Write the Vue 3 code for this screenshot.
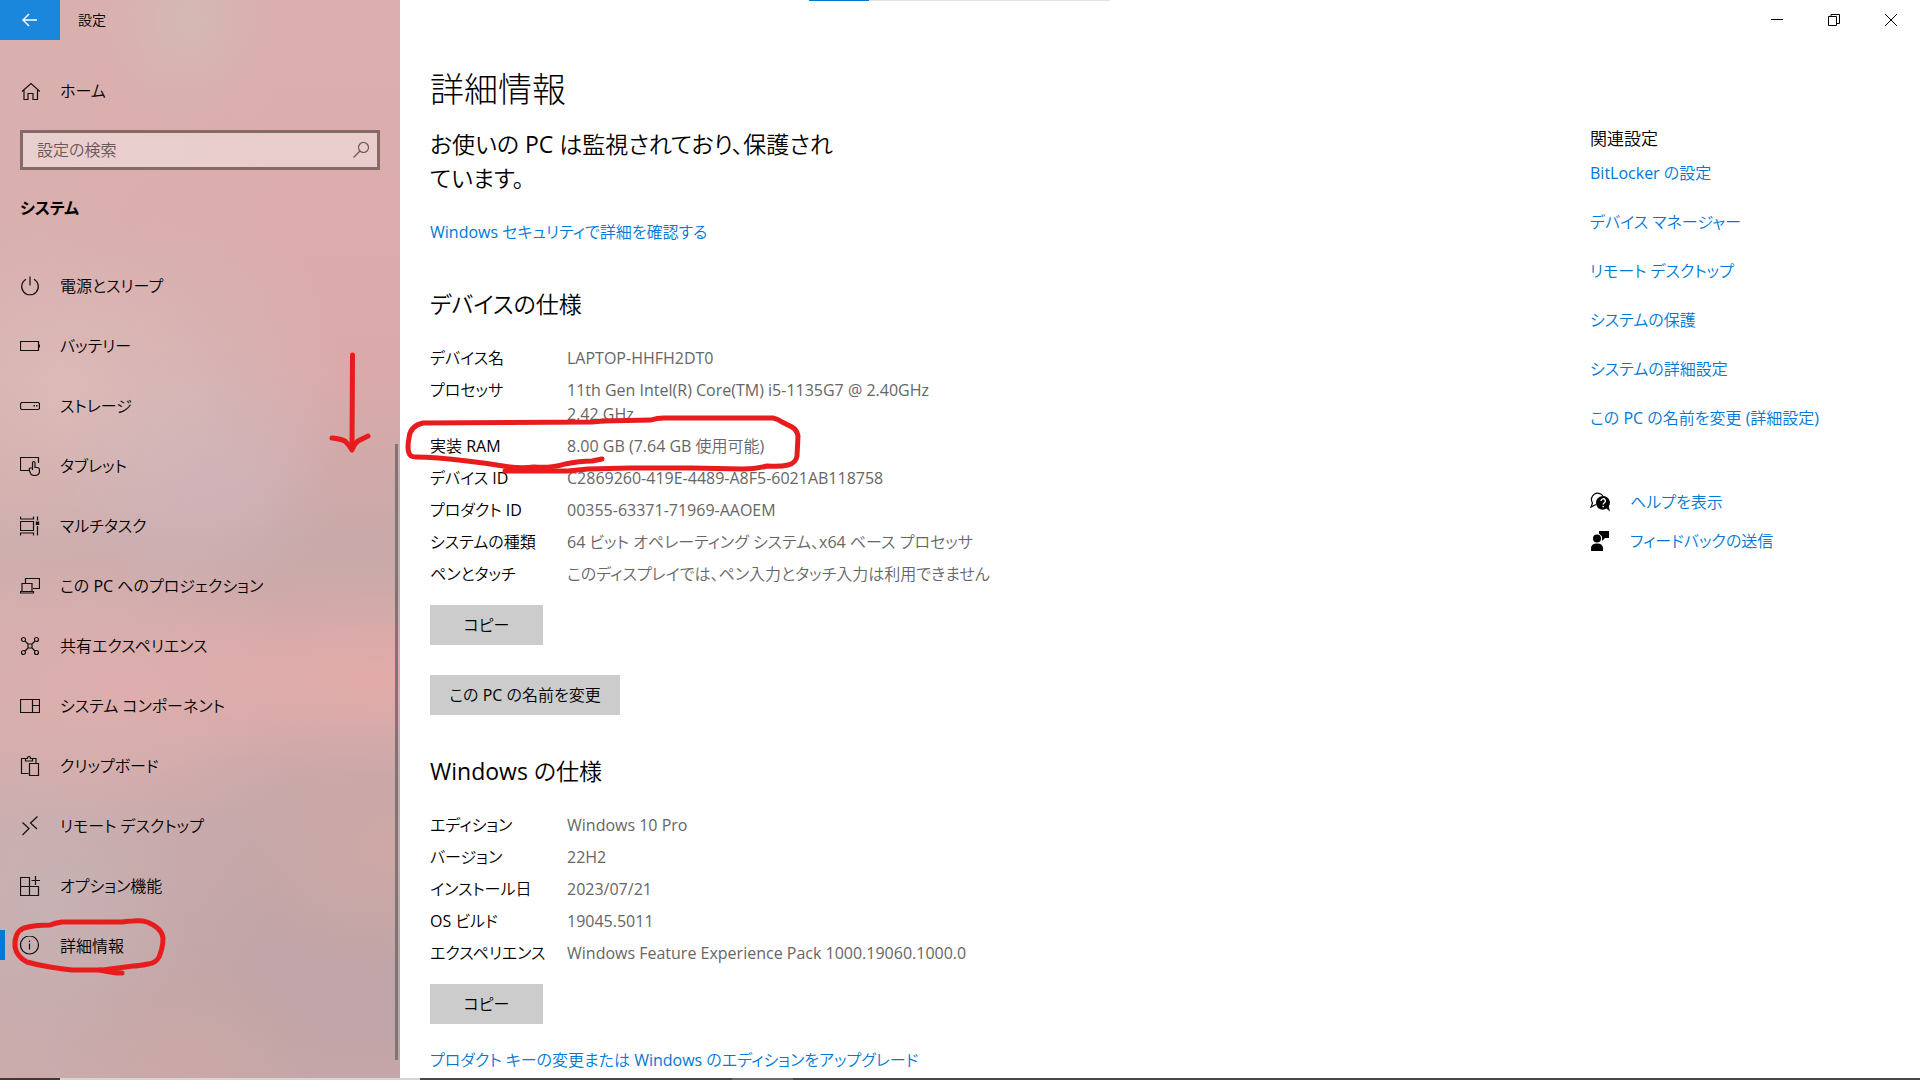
<template>
  <div class="screen">
    <div class="window">
      <!-- サイドバー -->
      <aside class="sidebar">
        <div class="titlebar">
          <button class="back-btn" type="button" aria-label="戻る">
            <svg width="16" height="14" viewBox="0 0 16 14">
              <path d="M15 7H1M7 1L1 7l6 6" />
            </svg>
          </button>
          <span class="app-name">設定</span>
        </div>

        <a href="#" class="nav-item home">
          <svg class="icon" width="20" height="20" viewBox="0 0 20 20">
            <path d="M2 10.500L11 2.500l9 8M4 9v9.500h4V12.500h5v6h4.500V9" />
          </svg>
          <span>ホーム</span>
        </a>

        <div class="search">
          <input v-model="keyword" type="text" placeholder="設定の検索" aria-label="設定の検索" />
          <svg width="16" height="16" viewBox="0 0 16 16">
            <circle cx="10.500" cy="5.500" r="5" />
            <path d="M7 9L0.500 15.500" />
          </svg>
        </div>

        <h2 class="category">システム</h2>

        <nav class="nav">
          <a
            v-for="item in navItems"
            :key="item.label"
            href="#"
            class="nav-item"
            :class="{ active: item.label === current }"
            @click.prevent="current = item.label"
          >
            <svg class="icon" width="20" height="20" viewBox="0 0 20 20">
              <path :d="item.icon" />
              <path v-if="item.dot" class="dot" :d="item.dot" />
            </svg>
            <span>{{ item.label }}</span>
          </a>
        </nav>
        <div class="scrollbar"></div>
      </aside>

      <!-- メイン -->
      <div class="content">
        <div class="window-controls">
          <button type="button" aria-label="最小化">
            <svg width="14" height="14" viewBox="0 0 14 14"><path d="M1 6.500h12" /></svg>
          </button>
          <button type="button" aria-label="元に戻す">
            <svg width="14" height="14" viewBox="0 0 14 14">
              <path d="M1.500 3.500h8v9h-8zM4 3.500v-2h8.500v9h-3" />
            </svg>
          </button>
          <button type="button" aria-label="閉じる">
            <svg width="14" height="14" viewBox="0 0 14 14"><path d="M1 1l12 12M13 1L1 13" /></svg>
          </button>
        </div>

        <div class="columns">
          <main class="main">
            <h1>詳細情報</h1>
            <p class="status">お使いの PC は監視されており、保護され<br />ています。</p>
            <a href="#" class="link security">Windows セキュリティで詳細を確認する</a>

            <h2>デバイスの仕様</h2>
            <dl class="specs">
              <div v-for="row in deviceSpecs" :key="row.label" class="spec">
                <dt>{{ row.label }}</dt>
                <dd>{{ row.value }}</dd>
              </div>
            </dl>
            <button type="button" class="btn">コピー</button>
            <button type="button" class="btn rename">この PC の名前を変更</button>

            <h2>Windows の仕様</h2>
            <dl class="specs">
              <div v-for="row in windowsSpecs" :key="row.label" class="spec">
                <dt>{{ row.label }}</dt>
                <dd>{{ row.value }}</dd>
              </div>
            </dl>
            <button type="button" class="btn">コピー</button>
            <a href="#" class="link upgrade">プロダクト キーの変更または Windows のエディションをアップグレード</a>
          </main>

          <!-- 関連設定 -->
          <aside class="related">
            <h3>関連設定</h3>
            <ul class="related-links">
              <li v-for="text in relatedLinks" :key="text">
                <a href="#" class="link">{{ text }}</a>
              </li>
            </ul>
            <div class="support">
              <a href="#" class="link">
                <svg width="20" height="20" viewBox="0 0 20 20">
                  <path
                    d="M6 12.500L1 15l1.500-4A6 6 0 1 1 13 4"
                    fill="none"
                    stroke="#000"
                    stroke-width="1.200"
                  />
                  <path d="M13 4a6.800 6.800 0 1 0 3.500 12.500L20 19.500l-1.200-5A6.800 6.800 0 0 0 13 4z" fill="#000" />
                  <path
                    d="M11 9a2.200 2.200 0 1 1 3.200 2q-1 .6-1 1.500M13.200 13.800v1.500"
                    fill="none"
                    stroke="#fff"
                    stroke-width="1.400"
                  />
                </svg>
                <span>ヘルプを表示</span>
              </a>
              <a href="#" class="link">
                <svg width="20" height="20" viewBox="0 0 20 20">
                  <circle cx="7" cy="7.500" r="4" />
                  <path d="M1 20v-2.500q0-5 6-5t6 5V20z" />
                  <path d="M9 0h10v7h-4l-3 3V5.500L9 2.500z" />
                </svg>
                <span>フィードバックの送信</span>
              </a>
            </div>
          </aside>
        </div>
      </div>
    </div>

    <!-- ウィンドウ下のタスクバーの端 -->
    <div class="taskbar"><i class="task-start"></i><i class="task-search"></i><i class="task-gap"></i><i class="task-app"></i></div>
    <!-- 画面上端の進行バー -->
    <div class="progress"><i></i></div>

    <!-- 手書きの注釈 -->
    <svg class="ink" width="820" height="1000" viewBox="0 0 820 1000" aria-hidden="true">
      <path d="M352.500 355L352 448" />
      <path d="M332 438Q341 439 345 441Q349 445 352 450Q354 444 358 441L368 436" />
      <path
        d="M603 421L651 420Q657 418 664 418L773 418Q778 419 782 422L792 427Q797 430 798 436L797 456Q796 463 788 465Q780 467 767 466Q755 469 743 469L691 468L630 468L588 469L568 471L505 471"
      />
      <path
        d="M603 421L592 422L423 423Q410 426 409 438Q407 448 409 453Q410 457 416 457Q435 457 467 461Q485 463 503 466Q520 469 534 467Q553 468 565 464Q580 461 592 461L602 459"
      />
      <path
        d="M50 925Q55 923 62 922L122 922Q128 921 133 921Q141 920 147 922Q162 928 163 938Q163 948 159 957Q156 963 148 964Q138 966 133 966L103 970L72 970Q62 969 50 967Q37 965 27 962Q17 957 15 947Q14 932 24 928Q34 925 50 925"
      />
      <path d="M100 970Q112 973 122 973" />
    </svg>
  </div>
</template>

<script setup>
import { ref } from 'vue';

// 検索キーワード
const keyword = ref('');

// 選択中の項目
const current = ref('詳細情報');

// サイドバーの項目
const navItems = [
  { label: '電源とスリープ', icon: 'M10 0.500v9M6 3.200a8.300 8.300 0 1 0 8 0' },
  { label: 'バッテリー', icon: 'M0.500 5.500h18v9h-18zM19.500 8.500v3' },
  { label: 'ストレージ', icon: 'M1.500 6.500h17l1 1v5l-1 1h-17l-1-1v-5z', dot: 'M13.500 9h1.500v1.500h-1.500zM16 9h1.500v1.500H16z' },
  { label: 'タブレット', icon: 'M9 14.500H0.500v-13h18v5.500M12.500 14V7q0-1.500 1.200-1.500T15 7v4.500h2.500q2 .5 2 2.500v1q0 4.500-5 4.500-3 0-4-2L9.300 14q-.3-2 1-2h2' },
  { label: 'マルチタスク', icon: 'M0.500 0.500v2.500h13V0.500M0.500 19.500V17h13v2.500M0.500 5.500h13v9h-13zM17.500 0.500v4M17.500 10v9.500', dot: 'M15.800 5.500h3.400v3.400h-3.400z' },
  { label: 'この PC へのプロジェクション', icon: 'M5.500 7.500v-5h14v10h-6.500M2 15.500v-8h10v8M0.500 15.500h13v1.500h-13z' },
  { label: '共有エクスペリエンス', icon: 'M4.500 4.500L8 8M12 12l3.500 3.500M15.500 4.500L12 8M8 12l-3.500 3.500M8 8h4v4H8zM1.500 3.500a2 2 0 1 0 4 0a2 2 0 1 0-4 0M14.500 3.500a2 2 0 1 0 4 0a2 2 0 1 0-4 0M1.500 16.500a2 2 0 1 0 4 0a2 2 0 1 0-4 0M14.500 16.500a2 2 0 1 0 4 0a2 2 0 1 0-4 0' },
  { label: 'システム コンポーネント', icon: 'M0.500 3.500h19v13h-19zM12.500 3.500v13M12.500 9.500h7' },
  { label: 'クリップボード', icon: 'M8.500 17.500h-7v-15h4V5h7V2.500h3.500v4.500M5.500 2.500h2q0-2 1.500-2t1.500 2h2M9.500 7.500h9v12h-9z' },
  { label: 'リモート デスクトップ', icon: 'M2.500 6.500l6.500 6-6.500 6.500M17.500 0.500L10.500 7l6.500 6' },
  { label: 'オプション機能', icon: 'M10 1.500H0.500v18h18v-9H0.500M9.500 1.500v18M15.500 0v9M11.500 4.500h9' },
  { label: '詳細情報', icon: 'M0.500 9a9 9 0 1 0 18 0a9 9 0 1 0-18 0M9.500 7.500v6M9.500 4.500v1.500' }
];

// デバイスの仕様
const deviceSpecs = [
  { label: 'デバイス名', value: 'LAPTOP-HHFH2DT0' },
  { label: 'プロセッサ', value: '11th Gen Intel(R) Core(TM) i5-1135G7 @ 2.40GHz\n2.42 GHz' },
  { label: '実装 RAM', value: '8.00 GB (7.64 GB 使用可能)' },
  { label: 'デバイス ID', value: 'C2869260-419E-4489-A8F5-6021AB118758' },
  { label: 'プロダクト ID', value: '00355-63371-71969-AAOEM' },
  { label: 'システムの種類', value: '64 ビット オペレーティング システム、x64 ベース プロセッサ' },
  { label: 'ペンとタッチ', value: 'このディスプレイでは、ペン入力とタッチ入力は利用できません' }
];

// Windows の仕様
const windowsSpecs = [
  { label: 'エディション', value: 'Windows 10 Pro' },
  { label: 'バージョン', value: '22H2' },
  { label: 'インストール日', value: '2023/07/21' },
  { label: 'OS ビルド', value: '19045.5011' },
  { label: 'エクスペリエンス', value: 'Windows Feature Experience Pack 1000.19060.1000.0' }
];

// 関連リンク
const relatedLinks = [
  'BitLocker の設定',
  'デバイス マネージャー',
  'リモート デスクトップ',
  'システムの保護',
  'システムの詳細設定',
  'この PC の名前を変更 (詳細設定)'
];
</script>

<style>
body {
  margin: 0;
  background: #ffffff;
}
</style>

<style scoped>
.screen {
  position: relative;
  display: flex;
  flex-direction: column;
  height: 100vh;
  overflow: hidden;
  font-family: "Open Sans", "Noto Sans CJK JP DemiLight", "Noto Sans CJK JP", sans-serif;
  font-feature-settings: "palt";
  font-size: 16px;
  line-height: 24px;
  color: #000000;
}

h1,
h2,
h3,
p,
dl,
dd,
ul {
  margin: 0;
  padding: 0;
  font-weight: inherit;
}

button {
  border: 0;
  padding: 0;
  font: inherit;
  font-feature-settings: inherit;
  color: inherit;
}

svg {
  flex: none;
}

.window {
  display: flex;
  flex: 1;
  min-height: 0;
}

/* サイドバー */
.sidebar {
  position: relative;
  display: flex;
  flex-direction: column;
  flex: none;
  width: 400px;
  background:
    radial-gradient(ellipse 90px 110px at 190px 20px, rgba(207, 190, 184, 0.6), transparent),
    radial-gradient(ellipse 160px 180px at 60px 385px, rgba(219, 190, 186, 0.7), transparent),
    radial-gradient(ellipse 150px 200px at 195px 400px, rgba(214, 184, 184, 0.7), transparent),
    radial-gradient(ellipse 150px 130px at 195px 470px, rgba(203, 178, 190, 0.7), transparent),
    radial-gradient(ellipse 300px 100px at 380px 675px, rgba(226, 171, 169, 1), transparent),
    radial-gradient(ellipse 220px 150px at 110px 690px, rgba(222, 175, 174, 0.9), transparent),
    radial-gradient(ellipse 140px 150px at 50px 900px, rgba(198, 180, 182, 0.7), transparent),
    radial-gradient(ellipse 160px 120px at 390px 850px, rgba(206, 168, 165, 0.9), transparent),
    radial-gradient(ellipse 140px 120px at 190px 1070px, rgba(203, 168, 165, 0.8), transparent),
    linear-gradient(90deg, rgba(214, 182, 180, 0.4), transparent 70%),
    linear-gradient(#dcaead 0, #daaaaa 380px, #c9a9a9 540px, #d0aaaa 700px, #c5a7a9 830px, #c0a4a7 1000px, #c5a6a9 1078px);
}

.titlebar {
  display: flex;
  align-items: center;
  height: 40px;
}

.back-btn {
  display: flex;
  align-items: center;
  justify-content: center;
  width: 60px;
  height: 40px;
  background: #1a86dc;
}

.back-btn svg {
  fill: none;
  stroke: #ffffff;
  stroke-width: 1.500;
}

.app-name {
  margin-left: 18px;
  font-size: 14px;
}

.nav-item {
  position: relative;
  display: flex;
  align-items: center;
  gap: 20px;
  height: 60px;
  padding-left: 20px;
  color: #000000;
  text-decoration: none;
}

.nav-item .icon {
  fill: none;
  stroke: #111111;
  stroke-width: 1.200;
}

.nav-item .dot {
  fill: #111111;
  stroke: none;
}

.nav-item.active::before {
  content: "";
  position: absolute;
  left: 0;
  top: 14px;
  width: 5px;
  height: 30px;
  background: #0078d7;
}

.home {
  margin-top: 21px;
}

.search {
  display: flex;
  align-items: center;
  height: 34px;
  margin: 9px 20px 0;
  padding-right: 8px;
  border: 3px solid #856a69;
  background: rgba(255, 255, 255, 0.4);
}

.search input {
  flex: 1;
  min-width: 0;
  padding: 0 0 0 14px;
  border: 0;
  outline: 0;
  background: transparent;
  font: inherit;
  font-feature-settings: inherit;
}

.search input::placeholder {
  color: #6b5858;
  opacity: 1;
}

.search svg {
  fill: none;
  stroke: #6b5858;
  stroke-width: 1.200;
}

.category {
  margin: 26px 20px 36px;
  font-family: "Open Sans", "Noto Sans CJK JP", sans-serif;
  font-size: 16px;
  font-weight: 700;
}

.scrollbar {
  position: absolute;
  right: 2px;
  top: 444px;
  bottom: 18px;
  width: 3px;
  background: #7c7676;
}

/* コンテンツ */
.content {
  display: flex;
  flex-direction: column;
  flex: 1;
  min-width: 0;
  background: #ffffff;
}

.window-controls {
  display: flex;
  justify-content: flex-end;
  padding-right: 1px;
}

.window-controls button {
  display: flex;
  align-items: center;
  justify-content: center;
  width: 57px;
  height: 40px;
  background: transparent;
}

.window-controls svg {
  fill: none;
  stroke: #000000;
  stroke-width: 1;
}

.columns {
  display: flex;
  justify-content: space-between;
  padding-left: 30px;
}

.main {
  display: flex;
  flex-direction: column;
  align-items: flex-start;
  white-space: nowrap;
}

h1 {
  margin-top: 24px;
  font-family: "Open Sans", "Noto Sans CJK JP", sans-serif;
  font-size: 34px;
  font-weight: 300;
  line-height: 50px;
}

.status {
  margin-top: 13px;
  font-size: 23px;
  line-height: 34px;
}

.security {
  margin-top: 25px;
}

.main h2 {
  margin-top: 43px;
  font-size: 23px;
  line-height: 34px;
}

.specs {
  margin: 21px 0 15px;
}

.spec {
  display: flex;
  padding: 4px 0;
}

.spec dt {
  width: 137px;
}

.spec dd {
  color: #666666;
  white-space: pre-line;
}

.btn {
  min-width: 113px;
  height: 40px;
  padding: 0 16px;
  background: #cccccc;
}

.rename {
  margin-top: 30px;
  min-width: 190px;
}

.main .rename + h2 {
  margin-top: 39px;
}

.link {
  color: #0078d7;
  text-decoration: none;
}

.upgrade {
  margin-top: 24px;
}

/* 関連設定 */
.related {
  width: 330px;
  padding-top: 87px;
}

.related h3 {
  font-size: 17px;
}

.related-links {
  display: flex;
  flex-direction: column;
  gap: 25px;
  margin-top: 10px;
  list-style: none;
}

.support {
  display: flex;
  flex-direction: column;
  gap: 15px;
  margin-top: 60px;
}

.support .link {
  display: flex;
  align-items: center;
  gap: 20px;
}

/* 画面の端 */
.taskbar {
  display: flex;
  flex: none;
  height: 2px;
  background: #48484a;
}

.task-start {
  width: 60px;
  background: #403638;
}

.task-search {
  width: 360px;
  background: #d4d4d4;
}

.task-gap {
  width: 312px;
}

.task-app {
  width: 61px;
  background: #6a6a6c;
}

.progress {
  position: absolute;
  left: 809px;
  top: 0;
  width: 301px;
  height: 1px;
  background: #e3e3e3;
}

.progress i {
  display: block;
  width: 60px;
  height: 1px;
  background: #0078d7;
}

/* 注釈 */
.ink {
  position: absolute;
  left: 0;
  top: 0;
  pointer-events: none;
  fill: none;
  stroke: #e81c1c;
  stroke-width: 5;
  stroke-linecap: round;
  stroke-linejoin: round;
}
</style>
